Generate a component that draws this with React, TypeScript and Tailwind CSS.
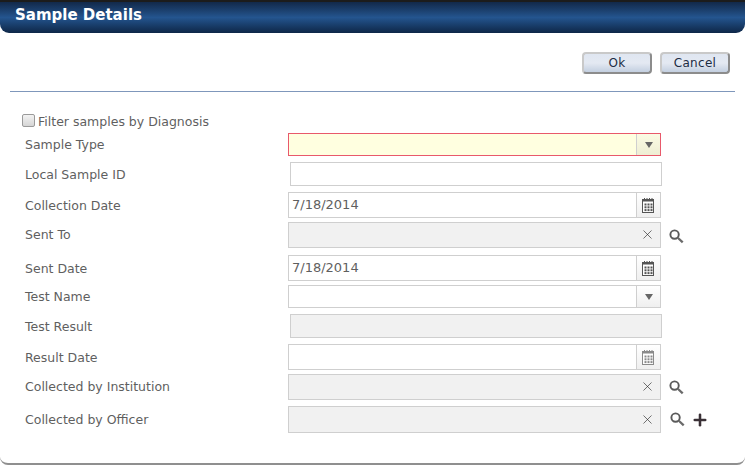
import { Plus, X } from "lucide-react";

function CalendarIcon({ muted }: { muted?: boolean }) {
  const c = muted ? "#8a8a8a" : "#555555";
  const cells = [];
  for (let r = 0; r < 3; r++) {
    for (let i = 0; i < 3; i++) {
      cells.push(<rect key={r + "-" + i} x={2.5 + i * 3} y={5.5 + r * 2.8} width="2" height="2" fill={c} />);
    }
  }
  return (
    <svg width="13" height="15" viewBox="0 0 13 15">
      <rect x="0.5" y="1.5" width="11" height="13" fill="#fff" stroke={c} />
      <rect x="0.5" y="1.5" width="11" height="2" fill={c} />
      <path d="M2.5 0v2M5 0v2M7.5 0v2M10 0v2" stroke={c} />
      {cells}
    </svg>
  );
}

function Magnifier({ className }: { className: string }) {
  return (
    <svg className={className} width="15" height="15" viewBox="0 0 14 14" fill="none">
      <circle cx="5.2" cy="5.2" r="3.9" stroke="#5a5a5a" strokeWidth="1.8" />
      <path d="M8.2 8.2l4.6 4.3" stroke="#6a6a6a" strokeWidth="2.1" />
    </svg>
  );
}

function DateField({ value, muted }: { value?: string; muted?: boolean }) {
  return (
    <div className="flex w-[373px] h-full border border-[#cfcfcf] bg-white">
      <div className="flex-1 pl-[3px] flex items-center text-[13px]">{value}</div>
      <div className="w-[24px] border-l border-[#cfcfcf] bg-gradient-to-b from-white to-[#efefef] flex items-center justify-center">
        <CalendarIcon muted={muted} />
      </div>
    </div>
  );
}

function SelectField({ required }: { required?: boolean }) {
  return (
    <div
      className={
        "flex w-[373px] h-full border " +
        (required ? "border-[#e8596b] bg-[#ffffe0]" : "border-[#cfcfcf] bg-white")
      }
    >
      <div className="flex-1" />
      <div
        className={
          "w-[24px] border-l border-[#cfcfcf] flex items-center justify-center bg-gradient-to-b " +
          (required ? "from-[#fbfbe4] to-[#eeeed4]" : "from-white to-[#efefef]")
        }
      >
        <div className="w-0 h-0 border-l-[4px] border-r-[4px] border-t-[6px] border-l-transparent border-r-transparent border-t-[#666]" />
      </div>
    </div>
  );
}

function LookupField() {
  return (
    <div className="flex w-[373px] h-full border border-[#cfcfcf] bg-[#f1f1f1] items-center justify-end pr-[5px]">
      <X size={15} strokeWidth={1} color="#222" className="-mt-[1px]" />
    </div>
  );
}

function Row({
  label,
  className,
  labelClass = "pt-[2px]",
  children,
}: {
  label: string;
  className: string;
  labelClass?: string;
  children: React.ReactNode;
}) {
  return (
    <div className={"flex items-center pl-[25px] " + className}>
      <div className={"w-[263px] " + labelClass}>{label}</div>
      {children}
    </div>
  );
}

function DialogButton({ label }: { label: string }) {
  return (
    <button className="w-[70px] h-[22px] rounded-[4px] border-2 border-[#c9c9c9] border-r-[#8c8c8c] border-b-[#8c8c8c] bg-gradient-to-b from-[#dfe6f1] via-[#e4e9f2] to-[#c3cfe0] text-[#1c2c44] text-[12px] tracking-[0.3px] leading-none font-['DejaVu_Sans',sans-serif]">
      {label}
    </button>
  );
}

export default function App() {
  return (
    <div className="w-[745px] h-[465px] bg-white overflow-hidden relative text-[#5f5f5f] text-[12.5px] font-['DejaVu_Sans',sans-serif] rounded-b-[8px] border-b-[2px] border-[#8f8f8f]">
      <div className="h-[33px] rounded-b-[9px] border-t-[2px] border-[#1c1c1c] bg-gradient-to-b from-[#12294a] via-[#24558f] to-[#0e2748] flex items-center pl-[15px]">
        <span className="text-white text-[15px] font-bold leading-none pb-[4px]">Sample Details</span>
      </div>

      <div className="flex justify-end gap-[8px] pr-[15px] pt-[19px]">
        <DialogButton label="Ok" />
        <DialogButton label="Cancel" />
      </div>

      <div className="mx-[10px] mt-[17px] border-t border-[#7f97bb]" />

      <div className="pl-[22px] mt-[21px] h-[15px] flex items-center">
        <span className="w-[13px] h-[13px] rounded-[2px] border border-[#9a9a9a] bg-gradient-to-b from-[#f3f3f3] to-[#d5d5d5] mr-[3px]" />
        <span className="pt-[3px]">Filter samples by Diagnosis</span>
      </div>

      <Row label="Sample Type" className="mt-[5px] h-[23px]">
        <SelectField required />
      </Row>
      <Row label="Local Sample ID" className="mt-[6px] h-[24px]">
        <div className="ml-[2px] w-[372px] h-full border border-[#cfcfcf] bg-white" />
      </Row>
      <Row label="Collection Date" className="mt-[6px] h-[26px]">
        <DateField value="7/18/2014" />
      </Row>
      <Row label="Sent To" className="mt-[4px] h-[26px]" labelClass="">
        <LookupField />
        <Magnifier className="ml-[8px] mt-[2px]" />
      </Row>
      <Row label="Sent Date" className="mt-[7px] h-[26px]">
        <DateField value="7/18/2014" />
      </Row>
      <Row label="Test Name" className="mt-[4px] h-[23px]">
        <SelectField />
      </Row>
      <Row label="Test Result" className="mt-[6px] h-[24px]">
        <div className="ml-[2px] w-[372px] h-full border border-[#cfcfcf] bg-[#f1f1f1]" />
      </Row>
      <Row label="Result Date" className="mt-[6px] h-[26px]">
        <DateField muted />
      </Row>
      <Row label="Collected by Institution" className="mt-[4px] h-[26px]" labelClass="">
        <LookupField />
        <Magnifier className="ml-[8px]" />
      </Row>
      <Row label="Collected by Officer" className="mt-[6px] h-[27px]">
        <LookupField />
        <Magnifier className="ml-[9px]" />
        <Plus className="ml-[6px]" size={18} strokeWidth={3.4} color="#3a3036" />
      </Row>
    </div>
  );
}
